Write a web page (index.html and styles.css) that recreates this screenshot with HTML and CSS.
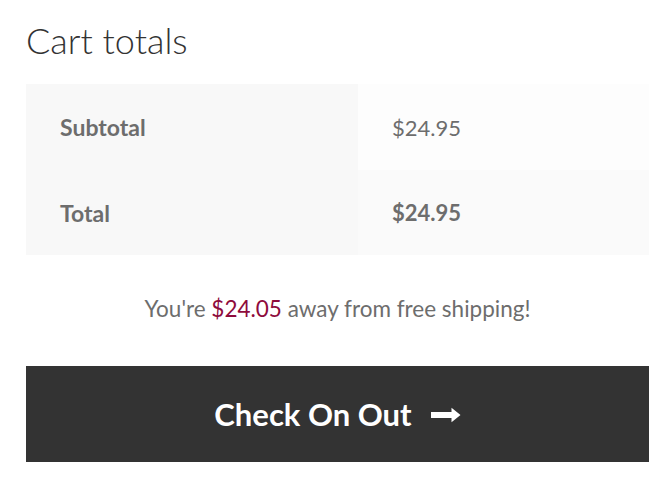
FILE: index.html
```html
<!DOCTYPE html>
<html>
<head>
<meta charset="utf-8">
<link rel="stylesheet" href="styles.css">
</head>
<body>
<div class="cart-totals">
  <h2 class="title">Cart totals</h2>
  <table class="totals">
    <tr class="row">
      <th class="label">Subtotal</th>
      <td class="value">$24.95</td>
    </tr>
    <tr class="row row-total">
      <th class="label">Total</th>
      <td class="value value-strong">$24.95</td>
    </tr>
  </table>
  <p class="shipping">You're <span class="amount">$24.05</span> away from free shipping!</p>
  <a class="checkout" href="#">Check On Out <svg class="arrow" width="31" height="16" viewBox="0 0 31 16"><path d="M1 5h20.5V0.8L30.5 8l-9 7.2V11H1z" fill="#fff"/></svg></a>
</div>
</body>
</html>
```
FILE: styles.css
```css
html, body { margin: 0; padding: 0; background: #fff; }
body { font-family: Lato, "Open Sans", sans-serif; color: #6d6d6d; }
.cart-totals { padding: 0 23px 0 26px; }
.title {
  margin: 0;
  padding-top: 18px;
  height: 84px;
  box-sizing: border-box;
  font-weight: 300;
  font-size: 36px;
  line-height: 44px;
  color: #333;
}
.totals { width: 100%; border-collapse: collapse; }
.row { height: 86px; }
.row-total { height: 85px; }
.label {
  width: 298px;
  background: #f8f8f8;
  text-align: left;
  padding: 0 0 0 34px;
  font-weight: 700;
  font-size: 23px;
}
.value {
  background: #fdfdfd;
  padding: 0 0 0 34px;
  font-size: 22px;
}
.row-total .value { background: #fafafa; }
.value-strong { font-weight: 700; }
.shipping {
  margin: 0;
  padding: 39px 0 0;
  height: 111px;
  box-sizing: border-box;
  text-align: center;
  font-size: 22.5px;
  line-height: 30px;
}
.amount { color: #8e0b3c; }
.checkout {
  display: flex;
  align-items: center;
  justify-content: center;
  gap: 18px;
  height: 96px;
  background: #333;
  color: #fff;
  text-decoration: none;
  font-weight: 700;
  font-size: 31px;
}
.arrow { margin-top: 2px; }
```
